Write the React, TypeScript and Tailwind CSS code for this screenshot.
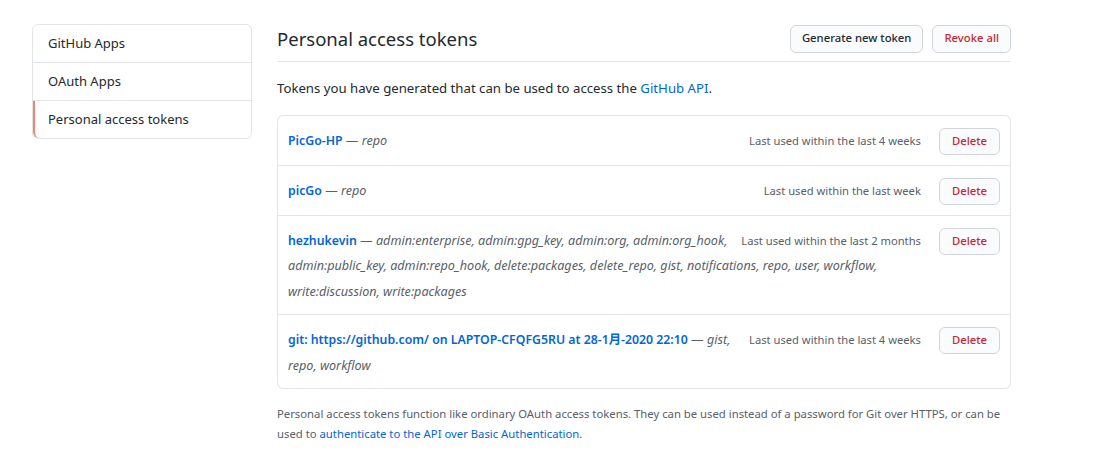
import React from "react";

const tokens = [
  { name: "PicGo-HP", scopes: "repo", used: "Last used within the last 4 weeks" },
  { name: "picGo", scopes: "repo", used: "Last used within the last week" },
  {
    name: "hezhukevin",
    scopes:
      "admin:enterprise, admin:gpg_key, admin:org, admin:org_hook, admin:public_key, admin:repo_hook, delete:packages, delete_repo, gist, notifications, repo, user, workflow, write:discussion, write:packages",
    used: "Last used within the last 2 months",
  },
  {
    name: "git: https://github.com/ on LAPTOP-CFQFG5RU at 28-1月-2020 22:10",
    scopes: "gist, repo, workflow",
    used: "Last used within the last 4 weeks",
  },
];

export default function App() {
  return (
    <div
      className="min-h-[469px] bg-white text-[#24292e]"
      style={{ fontFamily: '"Noto Sans", "Noto Sans CJK SC", sans-serif' }}
    >
      <div className="flex gap-[25px] pl-[32px] pt-[24px]">
        <nav className="w-[220px] shrink-0 self-start rounded-md border border-[#e1e4e8] text-[13px]">
          <div className="flex h-[38px] items-center border-b border-[#e1e4e8] px-[15px]">GitHub Apps</div>
          <div className="flex h-[38px] items-center border-b border-[#e1e4e8] px-[15px]">OAuth Apps</div>
          <div className="flex h-[37px] items-center rounded-bl-md border-l-2 border-[#f9826c] px-[13px]">
            Personal access tokens
          </div>
        </nav>

        <main className="w-[734px]">
          <div className="flex h-[38px] items-center justify-between border-b border-[#e1e4e8] pb-[9px] pt-[1px]">
            <h2 className="text-[18.5px] font-normal">Personal access tokens</h2>
            <div className="flex gap-[9px]">
              <button className="h-[28px] rounded-md border border-[#d1d5da] bg-[#fafbfc] px-[11px] text-[11.3px] font-medium">
                Generate new token
              </button>
              <button className="h-[28px] rounded-md border border-[#d1d5da] bg-[#fafbfc] px-[11px] text-[11.3px] font-medium text-[#cb2431]">
                Revoke all
              </button>
            </div>
          </div>

          <p className="mt-[17px] text-[13.2px]">
            Tokens you have generated that can be used to access the{" "}
            <span className="text-[#0366d6]">GitHub API</span>.
          </p>

          <div className="mt-[16px] rounded-md border border-[#e1e4e8]">
            {tokens.map((t, i) => (
              <div
                key={t.name}
                className={
                  "flow-root pb-[10px] pl-[10px] pr-[10px] pt-[12px] " +
                  (i < tokens.length - 1 ? "border-b border-[#e1e4e8]" : "")
                }
              >
                <button className="float-right h-[27px] rounded-md border border-[#d1d5da] bg-[#fafbfc] px-[12px] text-[11.3px] font-medium text-[#cb2431]">
                  Delete
                </button>
                <span className="float-right ml-[6px] mr-[18px] text-[11.2px] leading-[25.5px] text-[#586069]">
                  {t.used}
                </span>
                <div className="text-[12.6px] leading-[25.5px]">
                  <span className="text-[12.3px] font-semibold text-[#0366d6]">{t.name}</span>
                  <span className="text-[#586069]">
                    {" "}— <em>{t.scopes}</em>
                  </span>
                </div>
              </div>
            ))}
          </div>

          <p className="mt-[15px] text-[11.3px] leading-[20px] text-[#586069]">
            Personal access tokens function like ordinary OAuth access tokens. They can be used instead of a password for
            Git over HTTPS, or can be used to{" "}
            <span className="text-[#0366d6]">authenticate to the API over Basic Authentication</span>.
          </p>
        </main>
      </div>
    </div>
  );
}
